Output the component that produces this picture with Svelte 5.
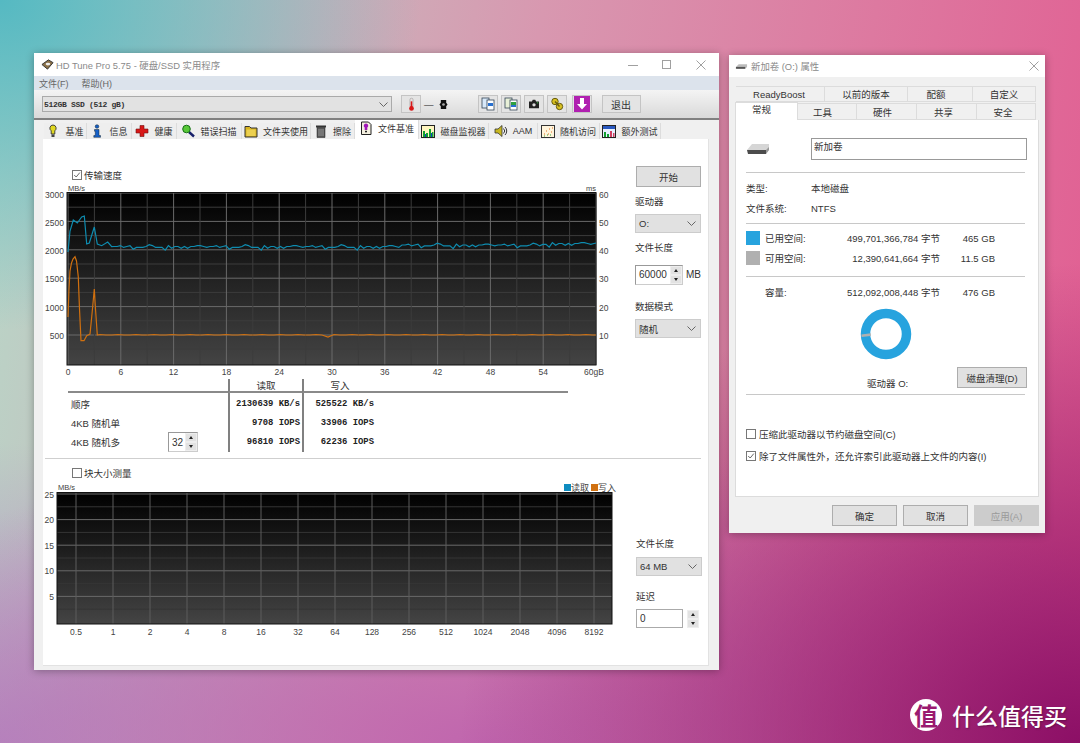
<script lang="ts">
	const tabs = [
		{ id: 'bulb', label: '基准', w: 43 },
		{ id: 'info', label: '信息', w: 45 },
		{ id: 'cross', label: '健康', w: 45 },
		{ id: 'lens', label: '错误扫描', w: 65 },
		{ id: 'folder', label: '文件夹使用', w: 69 },
		{ id: 'trash', label: '擦除', w: 44 },
		{ id: 'doc', label: '文件基准', w: 64, active: true },
		{ id: 'bars', label: '磁盘监视器', w: 70 },
		{ id: 'speaker', label: 'AAM', w: 49 },
		{ id: 'scatter', label: '随机访问', w: 62 },
		{ id: 'extra', label: '额外测试', w: 61 }
	];

	const upperTabs = [
		{ label: 'ReadyBoost', w: 89, pr: 2 },
		{ label: '以前的版本', w: 83, pr: 0 },
		{ label: '配额', w: 65, pr: 8 },
		{ label: '自定义', w: 63, pr: 0 }
	];
	const lowerTabs = [
		{ label: '工具', w: 59, pr: 9 },
		{ label: '硬件', w: 60, pr: 8 },
		{ label: '共享', w: 60, pr: 6 },
		{ label: '安全', w: 59, pr: 6 }
	];

	const results = [
		{ label: '顺序', read: '2130639 KB/s', write: '525522 KB/s' },
		{ label: '4KB 随机单', read: '9708 IOPS', write: '33906 IOPS' },
		{ label: '4KB 随机多', read: '96810 IOPS', write: '62236 IOPS', queue: true }
	];

	// chart 1 scale: 3 GB = 26.4px, 250 MB/s = 14.17px
	const gbTicks = Array.from({ length: 21 }, (_, i) => i * 3);
	const mbLines = Array.from({ length: 12 }, (_, i) => 194 + i * 14.2);
	const leftLabels = ['3000', '2500', '2000', '1500', '1000', '500'];
	const rightLabels = ['60', '50', '40', '30', '20', '10'];

	const xOf = (gb: number) => 68 + gb * 8.8;

	// same hand-picked wobble repeated with a drift so the trace doesn't look periodic
	const wobble = [0, 1, -1, 1, 0, -1, 2, 0, 1, -1, 0, 2, 3, 0, -1, 1, 0, -2, 0, 1, 0, 1, 4, 1, -1, 0, 1, 2, 0, -1];

	function readLine() {
		const pts: [number, number][] = [
			[68, 253], [70, 232], [73.3, 221], [77.3, 224], [81.7, 218], [84.3, 217], [86.7, 245], [89.3, 244],
			[94.3, 228], [97.3, 245], [101.7, 246.7], [107.7, 243], [111.7, 247.7]
		];
		for (let x = 114, i = 0; x < 596; x += 3.2, i++) {
			const drift = x > 540 ? -3 : x > 400 ? -1.5 : 0;
			pts.push([x, 247.5 + drift + wobble[(i * 7) % wobble.length] * 0.9]);
		}
		pts.push([596, 244]);
		return pts.map((p) => p.join(',')).join(' ');
	}

	function writeLine() {
		const pts: [number, number][] = [
			[68, 318], [69, 290], [70, 272], [71.5, 264], [73, 260], [75, 257.7], [76.5, 262], [78.3, 278], [79.5, 310],
			[81, 341.7], [84, 341.7], [86.7, 336.7], [90, 335], [92, 315], [94.3, 290], [95.5, 310], [97.3, 336]
		];
		for (let x = 100, i = 0; x < 596; x += 6, i++) {
			pts.push([x, i === 38 ? 338 : 336 - (i % 3 === 0 ? 0.5 : 0)]);
		}
		pts.push([596, 336]);
		return pts.map((p) => p.join(',')).join(' ');
	}

	const blockLabels = ['0.5', '1', '2', '4', '8', '16', '32', '64', '128', '256', '512', '1024', '2048', '4096', '8192'];
	const blockY = ['25', '20', '15', '10', '5'];
</script>

{#snippet tabIcon(id: string)}
	<svg class="ico" viewBox="0 0 14 14" width="14" height="14">
		{#if id === 'bulb'}
			<path d="M7 1a3.2 3.2 0 0 0-1.800 5.800V10h3.600V6.800A3.200 3.200 0 0 0 7 1z" fill="#e0d820" stroke="#333" stroke-width=".9" />
			<rect x="5.500" y="10.500" width="3" height="2.500" fill="#444" />
		{:else if id === 'info'}
			<circle cx="7" cy="2.500" r="1.800" fill="#1560c8" stroke="#123" stroke-width=".5" />
			<path d="M4.500 5.500H9V11.500H10.500V13.300H3.800V11.500H5.300V7.200H4.500z" fill="#1560c8" stroke="#123" stroke-width=".5" />
		{:else if id === 'cross'}
			<path d="M5 1.500H9V5H13V9H9V12.500H5V9H1V5H5z" fill="#d81818" stroke="#701010" stroke-width=".6" />
		{:else if id === 'lens'}
			<path d="M8 8l5 4.500" stroke="#17206a" stroke-width="2.400" />
			<circle cx="5.500" cy="5" r="3.800" fill="#58c838" stroke="#167016" />
		{:else if id === 'folder'}
			<path d="M1 4.500V2.500H5.500L7 4H13V13H1z" fill="#d8b420" stroke="#333" />
			<rect x="2.500" y="5.500" width="9" height="6.500" fill="#ecd050" />
		{:else if id === 'trash'}
			<rect x="2" y="1.500" width="10" height="2" fill="#333" />
			<path d="M3 3.500H11V13.500H3z" fill="#555" stroke="#222" stroke-width=".5" />
			<path d="M5 5v7M7 5v7M9 5v7" stroke="#aaa" stroke-width=".8" />
		{:else if id === 'doc'}
			<path d="M2.500 1H9.500L12 3.500V13.500H2.500z" fill="#f4f0e0" stroke="#222" />
			<path d="M7 2.500a2.200 2.200 0 0 0-1.300 4v2.500H8.300V6.500A2.200 2.200 0 0 0 7 2.500z" fill="#a018b8" />
			<rect x="6" y="9.800" width="2" height="1.500" fill="#222" />
		{:else if id === 'bars'}
			<rect x=".5" y="1.500" width="13" height="12" fill="#fff6c0" stroke="#222" />
			<path d="M2 13V7h2v6zM5 13V9h2v4zM8 13V5h2v8zM11 13V8h1.500v5z" fill="#10a030" />
			<path d="M4 13V10h1v3zM10 13V9h1v4z" fill="#1040c0" />
		{:else if id === 'speaker'}
			<path d="M1 5H4L8 1.500V12.500L4 9H1z" fill="#c8b820" stroke="#333" stroke-width=".8" />
			<path d="M9.500 4.500a3.500 3.500 0 0 1 0 5M11 3a5.500 5.500 0 0 1 0 8" fill="none" stroke="#333" stroke-width="1" />
		{:else if id === 'scatter'}
			<rect x=".5" y="1.500" width="13" height="12" fill="#fff4dc" stroke="#333" />
			<path d="M3 10h1M5 7h1M7 10h1M8 5h1M10 8h1M11 4h1" stroke="#e07020" stroke-width="1" />
			<path d="M3 12h1M6 11h1M9 11h1" stroke="#30a030" stroke-width="1" />
		{:else}
			<rect x=".5" y="1.500" width="13" height="12" fill="#e8f0ff" stroke="#222" />
			<rect x="1" y="2" width="12" height="3" fill="#2858c0" />
			<path d="M2 13V8h2v5zM5 13V10h2v3z" fill="#10a030" />
			<path d="M8 13V7h2v6zM11 13V9h1.500v4z" fill="#d04060" />
		{/if}
	</svg>
{/snippet}

{#snippet chevron()}
	<svg class="chev" viewBox="0 0 9 5" width="9" height="5"><path d="M.5 .5L4.500 4.500L8.500 .5" fill="none" stroke="#666" /></svg>
{/snippet}

{#snippet spinner()}
	<span class="spin">
		<span class="spin-btn"><i class="up"></i></span>
		<span class="spin-btn"><i class="down"></i></span>
	</span>
{/snippet}

<div class="desktop">
	<!-- HD Tune window -->
	<section class="win hdtune">
		<header class="titlebar">
			<svg viewBox="0 0 14 14" width="13" height="13">
				<path d="M1 7L8 2L13 5L7 12z" fill="#8a7048" stroke="#333" />
				<ellipse cx="7.500" cy="6.500" rx="2.500" ry="1.500" fill="#eee" />
			</svg>
			<span class="title-text">HD Tune Pro 5.75 - 硬盘/SSD 实用程序</span>
			<div class="caption">
				<svg viewBox="0 0 10 10" width="10" height="10"><path d="M0 5.500H10" stroke="#a0a0a0" /></svg>
				<svg viewBox="0 0 10 10" width="10" height="10"><rect x=".5" y=".5" width="8" height="8" fill="none" stroke="#a0a0a0" /></svg>
				<svg viewBox="0 0 10 10" width="10" height="10"><path d="M.5 .5L9.500 9.500M9.500 .5L.5 9.500" stroke="#a0a0a0" /></svg>
			</div>
		</header>
		<nav class="menubar">
			<span>文件(F)</span>
			<span>帮助(H)</span>
		</nav>
		<div class="toolbar">
			<div class="drive-select"><span>512GB SSD (512 gB)</span>{@render chevron()}</div>
			<button class="tool first">
				<svg viewBox="0 0 14 18" width="11" height="15">
					<rect x="5" y="1" width="4" height="11" rx="2" fill="#e8e0e0" stroke="#888" stroke-width=".6" />
					<rect x="6" y="5" width="2" height="8" fill="#d81818" />
					<circle cx="7" cy="14" r="3" fill="#d81818" />
				</svg>
			</button>
			<span class="temp">—</span>
			<svg class="temp-ico" viewBox="0 0 10 12" width="9" height="11">
				<path d="M2 1H8V4L9.500 6L8 8V11H2V8L.5 6L2 4z" fill="#111" />
				<circle cx="5" cy="6" r="1.500" fill="#aaa" />
			</svg>
			<div class="tool-group">
				<button class="tool">
					<svg viewBox="0 0 14 14" width="14" height="14">
						<rect x="1" y="1" width="7" height="10" fill="#d8e8f8" stroke="#345" stroke-width=".8" />
						<rect x="6" y="3" width="7" height="10" fill="#fff" stroke="#345" stroke-width=".8" />
						<rect x="7" y="6" width="5" height="3" fill="#2870d0" />
					</svg>
				</button>
				<button class="tool">
					<svg viewBox="0 0 14 14" width="14" height="14">
						<rect x="1" y="1" width="7" height="10" fill="#e8f0d8" stroke="#345" stroke-width=".8" />
						<rect x="6" y="3" width="7" height="10" fill="#fff" stroke="#345" stroke-width=".8" />
						<rect x="7" y="5" width="5" height="3" fill="#30a040" />
						<rect x="7" y="8" width="5" height="2" fill="#2870d0" />
					</svg>
				</button>
				<button class="tool">
					<svg viewBox="0 0 14 12" width="12" height="10">
						<path d="M1 3H4.500L5.500 1H8.500L9.500 3H13V11H1z" fill="#222" />
						<circle cx="7" cy="7" r="2" fill="#ddd" />
						<rect x="10.500" y="4" width="1.500" height="1.200" fill="#30c040" />
					</svg>
				</button>
				<button class="tool">
					<svg viewBox="0 0 14 14" width="14" height="14">
						<circle cx="5" cy="4.500" r="3.200" fill="#d8c020" stroke="#665c10" />
						<circle cx="9.500" cy="9.500" r="3.200" fill="#d8c020" stroke="#665c10" />
						<path d="M5 4.500L9.500 9.500" stroke="#665c10" stroke-width="1.400" />
					</svg>
				</button>
				<button class="tool save">
					<svg viewBox="0 0 16 16" width="16" height="16">
						<rect width="16" height="16" fill="#b020b0" />
						<path d="M6 2H10V8H13L8 13.500L3 8H6z" fill="#fff" />
					</svg>
				</button>
				<button class="tool exit">退出</button>
			</div>
		</div>

		<div class="tabstrip">
			{#each tabs as tab}
				<div class="tab" class:active={tab.active} style="width:{tab.w}px">
					{@render tabIcon(tab.id)}
					<span>{tab.label}</span>
				</div>
			{/each}
		</div>

		<div class="panel">
			<div class="col-main top-main">
				<label class="check-row">
					<span class="box"><svg viewBox="0 0 10 10" width="10" height="10"><path d="M1.500 5L4 7.500L8.500 2" fill="none" stroke="#444" /></svg></span>
					传输速度
				</label>
				<svg class="chart" viewBox="43 184 585 196" width="585" height="196">
					<defs>
						<linearGradient id="plotbg" x1="0" y1="0" x2="0" y2="1">
							<stop offset="0" stop-color="#000" />
							<stop offset="1" stop-color="#444" />
						</linearGradient>
					</defs>
					<rect x="67" y="194" width="529" height="172" fill="url(#plotbg)" />
					{#each mbLines as y, i}
						<line x1="67" x2="596" y1={y} y2={y} stroke={i % 2 === 0 ? '#6a6a6a' : '#3c3c3c'} />
					{/each}
					{#each gbTicks as gb, i}
						<line x1={xOf(gb)} x2={xOf(gb)} y1="194" y2="366" stroke={i % 2 === 0 ? '#6a6a6a' : '#3c3c3c'} />
					{/each}
					<rect x="67" y="193.500" width="529" height="172.500" fill="none" stroke="#111" />
					<polyline points={writeLine()} fill="none" stroke="#d0700f" stroke-width="1.200" />
					<polyline points={readLine()} fill="none" stroke="#0e8cb0" stroke-width="1.200" />
					<text class="unit" x="68" y="192">MB/s</text>
					<text class="unit" x="596" y="192" text-anchor="end">ms</text>
					{#each leftLabels as label, i}
						<text class="tick" x="64" y={198.500 + i * 28.300} text-anchor="end">{label}</text>
					{/each}
					{#each rightLabels as label, i}
						<text class="tick" x="599" y={198.500 + i * 28.300}>{label}</text>
					{/each}
					{#each gbTicks as gb, i}
						{#if i % 2 === 0}
							<text class="tick" x={gb === 60 ? 594 : xOf(gb)} y="376" text-anchor="middle">{gb === 60 ? '60gB' : gb}</text>
						{/if}
					{/each}
				</svg>
				<div class="results">
					<div class="res-head"></div>
					<div class="res-head vline">读取</div>
					<div class="res-head vline">写入</div>
					<div class="res-head"></div>
					{#each results as row}
						<div class="res-label">
							<span>{row.label}</span>
							{#if row.queue}
								<span class="numbox small">32 {@render spinner()}</span>
							{/if}
						</div>
						<div class="res-val vline">{row.read}</div>
						<div class="res-val vline">{row.write}</div>
						<div></div>
					{/each}
				</div>
			</div>

			<aside class="col-side top-side">
				<button class="btn start">开始</button>
				<div class="field-label">驱动器</div>
				<div class="select"><span>O:</span>{@render chevron()}</div>
				<div class="field-label file-len">文件长度</div>
				<div class="size-row">
					<span class="numbox">60000 {@render spinner()}</span>
					<span>MB</span>
				</div>
				<div class="field-label mode">数据模式</div>
				<div class="select"><span>随机</span>{@render chevron()}</div>
			</aside>

			<hr class="divider" />

			<div class="col-main lower-main">
				<label class="check-row">
					<span class="box"></span>
					块大小测量
				</label>
				<svg class="chart" viewBox="43 482 585 160" width="585" height="160">
					<rect x="57" y="494" width="555" height="131" fill="url(#plotbg)" />
					{#each Array.from({ length: 10 }, (_, i) => i) as i}
						<line x1="57" x2="612" y1={495 + i * 12.800} y2={495 + i * 12.800} stroke={i % 2 === 0 ? '#6a6a6a' : '#353535'} />
					{/each}
					{#each blockLabels as label, i}
						<line x1={76 + i * 37} x2={76 + i * 37} y1="494" y2="625" stroke="#5c5c5c" />
						<text class="tick" x={76 + i * 37} y="636" text-anchor="middle">{label}</text>
					{/each}
					<rect x="57" y="493.500" width="555" height="131.500" fill="none" stroke="#111" />
					<text class="unit" x="58" y="491">MB/s</text>
					{#each blockY as label, i}
						<text class="tick" x="54" y={498.500 + i * 25.600} text-anchor="end">{label}</text>
					{/each}
					<rect x="564" y="485" width="7" height="7" fill="#0e8cc0" />
					<text class="unit legend" x="571" y="492">读取</text>
					<rect x="591" y="485" width="7" height="7" fill="#d0700f" />
					<text class="unit legend" x="598" y="492">写入</text>
				</svg>
			</div>

			<aside class="col-side lower-side">
				<div class="field-label">文件长度</div>
				<div class="select"><span>64 MB</span>{@render chevron()}</div>
				<div class="field-label delay">延迟</div>
				<div class="size-row">
					<span class="delay-box">0</span>
					{@render spinner()}
				</div>
			</aside>
		</div>
	</section>

	<!-- drive properties dialog -->
	<section class="win props">
		<header class="titlebar props-title">
			<svg viewBox="0 0 14 8" width="13" height="8">
				<path d="M1 5L4 2H13V5L11 7H2z" fill="#bbb" />
				<path d="M1 5H11V7H1z" fill="#555" />
			</svg>
			<span class="title-text">新加卷 (O:) 属性</span>
			<svg class="close" viewBox="0 0 10 10" width="10" height="10"><path d="M.5 .5L9.500 9.500M9.500 .5L.5 9.500" stroke="#a0a0a0" /></svg>
		</header>
		<div class="ptabs">
			<div class="ptab-row upper">
				{#each upperTabs as t}
					<div class="ptab" style="width:{t.w}px;padding-right:{t.pr}px">{t.label}</div>
				{/each}
			</div>
			<div class="ptab-row lower">
				<div class="ptab active">常规</div>
				{#each lowerTabs as t}
					<div class="ptab" style="width:{t.w}px;padding-right:{t.pr}px">{t.label}</div>
				{/each}
			</div>
		</div>
		<div class="ppanel">
			<div class="name-row">
				<svg viewBox="0 0 24 14" width="24" height="14">
					<path d="M1 8L6 2H23V8L20 12H3z" fill="#d6d6d6" />
					<path d="M1 8H20V12H2z" fill="#4c4c4c" />
					<path d="M20 8L23 5V8L20 12z" fill="#999" />
				</svg>
				<div class="name-input">新加卷</div>
			</div>
			<hr />
			<dl class="info">
				<dt>类型:</dt><dd>本地磁盘</dd>
				<dt>文件系统:</dt><dd>NTFS</dd>
			</dl>
			<hr />
			<div class="space">
				<span class="swatch used"></span><span>已用空间:</span><span class="num">499,701,366,784 字节</span><span class="num">465 GB</span>
				<span class="swatch free"></span><span>可用空间:</span><span class="num">12,390,641,664 字节</span><span class="num">11.5 GB</span>
			</div>
			<hr />
			<div class="space capacity">
				<span></span><span>容量:</span><span class="num">512,092,008,448 字节</span><span class="num">476 GB</span>
			</div>
			<div class="donut-wrap">
				<svg viewBox="0 0 52 52" width="52" height="52">
					<circle cx="26" cy="26" r="20.500" fill="none" stroke="#27a3de" stroke-width="9.500" />
					<path d="M1.300 26.500L10.800 25.300L10.700 28L1.600 29z" fill="#b0b0b0" />
				</svg>
			</div>
			<div class="clean-row">
				<span class="drive-name">驱动器 O:</span>
				<button class="btn clean">磁盘清理(D)</button>
			</div>
			<hr />
			<label class="check-row p1">
				<span class="box"></span>压缩此驱动器以节约磁盘空间(C)
			</label>
			<label class="check-row p2">
				<span class="box"><svg viewBox="0 0 10 10" width="10" height="10"><path d="M1.500 5L4 7.500L8.500 2" fill="none" stroke="#444" /></svg></span>
				除了文件属性外，还允许索引此驱动器上文件的内容(I)
			</label>
		</div>
		<footer class="pbuttons">
			<button class="btn">确定</button>
			<button class="btn">取消</button>
			<button class="btn disabled">应用(A)</button>
		</footer>
	</section>

	<div class="brand">
		<span class="brand-mark">值</span>
		<span class="brand-name">什么值得买</span>
	</div>
</div>

<style>
	:global(body) {
		margin: 0;
	}

	.desktop {
		position: relative;
		width: 1080px;
		height: 743px;
		overflow: hidden;
		font-family: 'Liberation Sans', 'Noto Sans CJK SC', sans-serif;
		font-size: 9.5px;
		color: #333;
		background:
			radial-gradient(ellipse 420px 330px at 0 0, #55b9c2 0%, rgba(85, 185, 194, 0) 100%),
			radial-gradient(ellipse 620px 480px at 100% 100%, #8c0f66 0%, rgba(140, 15, 102, 0) 100%),
			radial-gradient(ellipse 760px 300px at 45% 100%, #c066ae 0%, rgba(192, 102, 174, 0) 100%),
			radial-gradient(ellipse 450px 300px at 0 100%, #b090c4 0%, rgba(176, 144, 196, 0) 100%),
			linear-gradient(100deg, #b8d8c8 0%, #d898b0 45%, #e25a90 100%);
	}

	.win {
		position: absolute;
		background: #f0f0f0;
		box-shadow: 0 1px 8px rgba(0, 0, 0, 0.3);
	}

	.hdtune {
		left: 34px;
		top: 53px;
		width: 685px;
		height: 617px;
	}

	.props {
		left: 729px;
		top: 55px;
		width: 316px;
		height: 478px;
	}

	.titlebar {
		display: flex;
		align-items: center;
		gap: 2px;
		height: 23px;
		padding-left: 7px;
		background: #fff;
	}

	.title-text {
		color: #8a8a8a;
		font-size: 9.4px;
	}

	.caption {
		display: flex;
		gap: 24px;
		margin-left: auto;
		padding-right: 13px;
	}

	.menubar {
		display: flex;
		gap: 13px;
		height: 14px;
		align-items: center;
		padding-left: 5px;
		background: #dce3ec;
		color: #666;
		font-size: 9px;
	}

	.toolbar {
		display: flex;
		align-items: center;
		height: 30px;
		padding-left: 8px;
		box-sizing: border-box;
		background: linear-gradient(#f4f4f4, #d9d9d9);
		border-bottom: 2px solid #808080;
	}

	.drive-select {
		display: flex;
		align-items: center;
		justify-content: space-between;
		box-sizing: border-box;
		width: 350px;
		height: 16px;
		padding: 0 3px 0 1px;
		border: 1px solid #aaa;
		background: #e2e2e2;
		font: bold 8px 'Liberation Mono', monospace;
		letter-spacing: -0.3px;
	}

	.tool {
		display: flex;
		align-items: center;
		justify-content: center;
		box-sizing: border-box;
		width: 20px;
		height: 18px;
		padding: 0;
		border: 1px solid #c4c4c4;
		background: #e4e4e4;
	}

	.tool.first {
		margin-left: 9px;
	}

	.temp {
		margin-left: 3px;
		color: #222;
	}

	.temp-ico {
		margin-left: 5px;
	}

	.tool-group {
		display: flex;
		gap: 3px;
		margin-left: 30px;
	}

	.tool.save {
		margin-left: 2px;
	}

	.tool.exit {
		width: 39px;
		margin-left: 7px;
		font: inherit;
		font-size: 10px;
		color: #333;
	}

	.tabstrip {
		display: flex;
		align-items: flex-end;
		height: 19px;
		padding-left: 10px;
		box-sizing: border-box;
	}

	.tab {
		display: flex;
		align-items: center;
		justify-content: center;
		gap: 5px;
		box-sizing: border-box;
		height: 16px;
		border-right: 1px solid #dcdcdc;
		background: #eee;
		font-size: 9px;
		white-space: nowrap;
	}

	.tab.active {
		height: 19px;
		background: #fff;
		padding-bottom: 3px;
	}

	.ico {
		flex: none;
	}

	.panel {
		display: grid;
		grid-template-columns: 585px 1fr;
		grid-template-rows: 319px 1px 1fr;
		box-sizing: border-box;
		height: 527px;
		margin: 0 10px 0 9px;
		background: #fff;
		border-right: 1px solid #e2e2e2;
		border-bottom: 1px solid #e2e2e2;
	}

	.col-main {
		display: flex;
		flex-direction: column;
	}

	.top-main {
		padding-top: 28px;
	}

	.check-row {
		display: flex;
		align-items: center;
		gap: 2px;
		height: 16px;
		padding-left: 29px;
		font-size: 9.500px;
	}

	.box {
		display: inline-flex;
		align-items: center;
		justify-content: center;
		box-sizing: border-box;
		width: 10px;
		height: 10px;
		border: 1px solid #777;
		background: #fff;
	}

	.box svg {
		width: 8px;
		height: 8px;
	}

	.chart {
		display: block;
		flex: none;
	}

	.chart text {
		font-family: 'Liberation Sans', 'Noto Sans CJK SC', sans-serif;
		fill: #444;
	}

	.tick {
		font-size: 8.500px;
	}

	.unit {
		font-size: 7.500px;
	}

	.legend {
		font-size: 9px;
	}

	.results {
		display: grid;
		grid-template-columns: 160px 74px 74px 192px;
		grid-template-rows: 14px 21px 18px 20px;
		margin-left: 25px;
		font-size: 9.500px;
	}

	.res-head {
		display: flex;
		align-items: center;
		justify-content: center;
		border-bottom: 2px solid #8a8a8a;
	}

	.vline {
		border-left: 2px solid #808080;
	}

	.res-label {
		display: flex;
		align-items: center;
		justify-content: space-between;
		padding: 0 30px 0 3px;
	}

	.res-val {
		display: flex;
		align-items: center;
		justify-content: flex-end;
		padding-right: 2px;
		font: bold 8.900px 'Liberation Mono', monospace;
		color: #222;
	}

	.numbox {
		display: inline-flex;
		align-items: center;
		justify-content: space-between;
		box-sizing: border-box;
		width: 48px;
		height: 20px;
		padding-left: 3px;
		border: 1px solid #ccc;
		border-left-color: #999;
		border-top-color: #999;
		background: #fff;
		font-size: 10px;
		color: #333;
	}

	.numbox.small {
		width: 30px;
		height: 20px;
	}

	.spin {
		display: inline-flex;
		flex-direction: column;
		width: 12px;
		height: 18px;
		background: #ddd;
	}

	.spin-btn {
		display: flex;
		flex: 1;
		align-items: center;
		justify-content: center;
		border: 1px solid #eee;
		background: #e2e2e2;
	}

	.spin-btn i {
		width: 0;
		height: 0;
		border-left: 2.500px solid transparent;
		border-right: 2.500px solid transparent;
	}

	.spin-btn .up {
		border-bottom: 3px solid #222;
	}

	.spin-btn .down {
		border-top: 3px solid #222;
	}

	.col-side {
		display: flex;
		flex-direction: column;
		align-items: flex-start;
		padding-left: 7px;
	}

	.top-side {
		padding-top: 27px;
	}

	.btn {
		box-sizing: border-box;
		width: 65px;
		height: 21px;
		padding: 0;
		border: 1px solid #adadad;
		background: #e1e1e1;
		font: inherit;
		font-size: 9.500px;
		color: #333;
	}

	.start {
		margin-bottom: 9px;
		margin-left: 1px;
	}

	.field-label {
		height: 12px;
		margin-bottom: 6px;
		font-size: 9.500px;
		line-height: 12px;
	}

	.file-len {
		margin-bottom: 10px;
	}

	.select {
		display: flex;
		align-items: center;
		justify-content: space-between;
		box-sizing: border-box;
		width: 66px;
		height: 19px;
		margin-bottom: 9px;
		padding: 0 4px 0 3px;
		border: 1px solid #ccc;
		background: #e1e1e1;
		font-size: 9.500px;
	}

	.size-row {
		display: flex;
		align-items: center;
		gap: 3px;
		height: 21px;
		font-size: 10px;
	}

	.mode {
		margin-top: 16px;
	}

	.divider {
		grid-column: 1 / -1;
		width: 656px;
		margin: 0 0 0 2px;
		border: 0;
		background: #cfcfcf;
		height: 1px;
	}

	.lower-main {
		padding-top: 6px;
	}

	.lower-side {
		padding-top: 79px;
	}

	.lower-side .select {
		margin-left: 1px;
	}

	.lower-side .field-label:first-child {
		margin-left: 1px;
		margin-bottom: 7px;
	}

	.delay {
		margin: 6px 0 5px 1px;
	}

	.lower-side .size-row {
		margin-left: 1px;
		gap: 4px;
	}

	.delay-box {
		box-sizing: border-box;
		width: 47px;
		height: 19px;
		padding: 3px 3px;
		border: 1px solid #aaa;
		background: #fff;
	}

	/* properties */
	.props-title {
		height: 22px;
		padding-left: 6px;
		gap: 3px;
	}

	.close {
		margin-left: auto;
		margin-right: 6px;
	}

	.ptabs {
		padding: 9px 0 0 6px;
		height: 34px;
	}

	.ptab-row {
		display: flex;
	}

	.ptab-row.upper {
		height: 16px;
		padding-left: 1px;
	}

	.ptab-row.lower {
		height: 18px;
		align-items: flex-end;
	}

	.ptab {
		display: flex;
		align-items: center;
		justify-content: center;
		box-sizing: border-box;
		height: 16px;
		border: 1px solid #dcdcdc;
		border-left: 0;
		font-size: 9.500px;
		background: #f0f0f0;
	}

	.ptab-row.lower .ptab {
		height: 17px;
	}

	.ptab-row.lower .ptab.active {
		width: 63px;
		height: 18px;
		padding: 0 10px 5px 0;
		background: #fff;
		border-left: 1px solid #dcdcdc;
		border-bottom: 0;
	}

	.ppanel {
		box-sizing: border-box;
		height: 377px;
		margin: 0 6px;
		padding: 18px 11px 0 10px;
		background: #fff;
		border: 1px solid #dcdcdc;
		border-top: 0;
		font-size: 9.500px;
	}

	.ppanel hr {
		height: 1px;
		margin: 0;
		border: 0;
		width: 279px;
		background: #c8c8c8;
	}

	.name-row {
		display: flex;
		align-items: center;
		gap: 41px;
		height: 22px;
		margin-bottom: 12px;
	}

	.name-input {
		box-sizing: border-box;
		width: 216px;
		height: 22px;
		padding: 0 2px;
		border: 1px solid #999;
	}

	.info {
		display: grid;
		grid-template-columns: 65px 1fr;
		grid-auto-rows: 20px;
		align-items: center;
		height: 50px;
		margin: 0;
		padding-top: 5px;
		box-sizing: border-box;
	}

	.info dd {
		margin: 0;
	}

	.space {
		display: grid;
		grid-template-columns: 19px 60px 115px 55px;
		grid-auto-rows: 20px;
		align-items: center;
		height: 52px;
		padding-top: 4px;
		box-sizing: border-box;
	}

	.space.capacity {
		height: auto;
		padding-top: 5px;
	}

	.num {
		text-align: right;
	}

	.swatch {
		width: 14px;
		height: 14px;
	}

	.swatch.used {
		background: #27a3de;
	}

	.swatch.free {
		background: #b0b0b0;
	}

	.donut-wrap {
		display: flex;
		justify-content: center;
		box-sizing: border-box;
		width: 279px;
		height: 56px;
		padding-top: 6px;
	}

	.clean-row {
		display: flex;
		align-items: center;
		justify-content: space-between;
		height: 36px;
		width: 281px;
	}

	.drive-name {
		padding-left: 121px;
		padding-top: 14px;
	}

	.clean {
		width: 70px;
		margin-top: 3px;
	}

	.check-row.p1,
	.check-row.p2 {
		padding-left: 0;
		gap: 3px;
	}

	.check-row.p1 {
		margin-top: 31px;
	}

	.check-row.p2 {
		margin-top: 6px;
	}

	.pbuttons {
		display: flex;
		justify-content: flex-end;
		gap: 6px;
		padding: 8px 6px 0 0;
	}

	.disabled {
		color: #9a9a9a;
		background: #ccc;
		border-color: #ccc;
	}

	.brand {
		position: absolute;
		left: 910px;
		top: 699px;
		display: flex;
		align-items: center;
		gap: 10px;
		font-family: 'Noto Sans CJK SC', sans-serif;
	}

	.brand-mark {
		display: flex;
		align-items: center;
		justify-content: center;
		width: 32px;
		height: 32px;
		border-radius: 50%;
		background: #fff;
		color: #9a1a70;
		font-size: 24px;
		font-weight: 700;
		line-height: 1;
	}

	.brand-name {
		color: #fff;
		font-size: 23px;
		font-weight: 500;
		line-height: 32px;
		text-shadow: 1px 1px 2px rgba(0, 0, 0, 0.3);
	}
</style>
